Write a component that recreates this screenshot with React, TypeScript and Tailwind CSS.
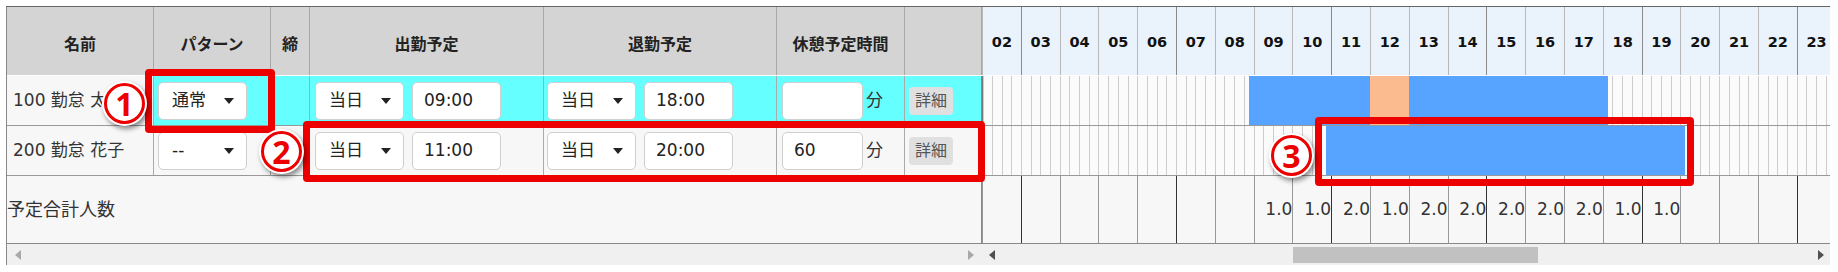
import React from "react";

type Bar = { from: number; to: number; color: string; pad: number };

type Row = {
  name: string;
  pattern: string;
  inDay: string;
  inTime: string;
  outDay: string;
  outTime: string;
  rest: string;
  active?: boolean;
  bars: Bar[];
};

const HOURS = Array.from({ length: 22 }, (_, i) => String(i + 2).padStart(2, "0"));
const HOUR_W = 38.8;

const TOTALS: Record<string, string> = {
  "09": "1.0",
  "10": "1.0",
  "11": "2.0",
  "12": "1.0",
  "13": "2.0",
  "14": "2.0",
  "15": "2.0",
  "16": "2.0",
  "17": "2.0",
  "18": "1.0",
  "19": "1.0",
};

const ROWS: Row[] = [
  {
    name: "100 勤怠 太郎",
    pattern: "通常",
    inDay: "当日",
    inTime: "09:00",
    outDay: "当日",
    outTime: "18:00",
    rest: "",
    active: true,
    bars: [
      { from: 9, to: 18, color: "bg-[#56a4ff]", pad: 5 },
      { from: 12, to: 13, color: "bg-[#fbbb8f]", pad: 0 },
    ],
  },
  {
    name: "200 勤怠 花子",
    pattern: "--",
    inDay: "当日",
    inTime: "11:00",
    outDay: "当日",
    outTime: "20:00",
    rest: "60",
    bars: [{ from: 11, to: 20, color: "bg-[#56a4ff]", pad: 5 }],
  },
];

const COLS = "grid grid-cols-[147px_117px_39px_234px_233px_128px_77px]";

function Caret() {
  return (
    <svg width="10" height="6" viewBox="0 0 10 6">
      <path d="M0 0h10L5 6z" fill="#222" />
    </svg>
  );
}

function Select({ value }: { value: string }) {
  return (
    <div className="flex h-[38px] w-[89px] shrink-0 items-center justify-between rounded-[5px] border border-[#cfcfcf] bg-white pl-[13px] pr-[12px] text-[17px] text-[#222]">
      <span>{value}</span>
      <Caret />
    </div>
  );
}

function TextBox({ value, width = "w-[89px]" }: { value: string; width?: string }) {
  return (
    <div
      className={`flex h-[38px] shrink-0 items-center rounded-[5px] border border-[#cfcfcf] bg-white pl-[11px] text-[17px] text-[#222] ${width}`}
    >
      {value}
    </div>
  );
}

function Badge({ n, className }: { n: string; className: string }) {
  return (
    <div
      className={`absolute flex h-[41px] w-[41px] items-center justify-center rounded-full border-[3px] border-[#ec0000] bg-white font-['Noto_Sans',sans-serif] text-[32px] font-bold leading-none text-[#ec0000] shadow-[0_0_0_2px_#ffffff,2px_3px_5px_2px_rgba(0,0,0,0.45)] ${className}`}
    >
      {n}
    </div>
  );
}

function Arrow({ dir, dark }: { dir: "left" | "right"; dark?: boolean }) {
  return (
    <svg width="6" height="10" viewBox="0 0 6 10">
      <path d={dir === "left" ? "M6 0v10L0 5z" : "M0 0v10l6-5z"} fill={dark ? "#505050" : "#a8a8a8"} />
    </svg>
  );
}

export default function App() {
  return (
    <div className="relative h-[272px] w-[1838px] overflow-hidden bg-white pl-[6px] pt-[6px] font-['DejaVu_Sans','Noto_Sans_CJK_JP',sans-serif] text-[#333]">
      <div className="flex w-[1824px] border-t border-[#666]">
        {/* left table */}
        <div className="w-[976px] shrink-0 border-l border-[#888]">
          <div className={`${COLS} h-[69px] border-b border-white bg-[#d4d4d4] text-[16px] font-bold text-[#222]`}>
            {["名前", "パターン", "締", "出勤予定", "退勤予定", "休憩予定時間", ""].map((h, i) => (
              <div key={i} className="flex items-center justify-center border-r border-[#a8a8a8] pt-[7px]">
                {h}
              </div>
            ))}
          </div>

          {ROWS.map((r) => (
            <div
              key={r.name}
              className={`${COLS} h-[50px] border-b border-[#999] ${r.active ? "bg-[#66ffff]" : "bg-[#f7f7f7]"}`}
            >
              <div className="flex items-center overflow-hidden whitespace-nowrap border-r border-[#aaa] bg-[#f7f7f7] pl-[6px] text-[17px]">
                {r.name}
              </div>
              <div className="flex items-center border-r border-[#aaa] pl-[4px]">
                <Select value={r.pattern} />
              </div>
              <div className="border-r border-[#aaa]" />
              <div className="flex items-center gap-[8px] border-r border-[#aaa] pl-[5px]">
                <Select value={r.inDay} />
                <TextBox value={r.inTime} />
              </div>
              <div className="flex items-center gap-[8px] border-r border-[#aaa] pl-[3px]">
                <Select value={r.outDay} />
                <TextBox value={r.outTime} />
              </div>
              <div className="flex items-center gap-[3px] border-r border-[#aaa] pl-[5px] text-[17px]">
                <TextBox value={r.rest} width="w-[81px]" />
                <span>分</span>
              </div>
              <div className="flex items-center border-r border-[#888] pl-[4px]">
                <div className="flex h-[28px] items-center rounded-[4px] bg-[#e0e0e0] px-[6px] text-[16px] text-[#555]">詳細</div>
              </div>
            </div>
          ))}

          <div className="flex h-[68px] items-center border-b border-r border-[#888] bg-[#f7f7f7] text-[18px]">
            予定合計人数
          </div>

          <div className="flex h-[21px] items-center justify-between bg-[#f0f0f0] px-[8px]">
            <Arrow dir="left" />
            <Arrow dir="right" />
          </div>
        </div>

        {/* gantt */}
        <div className="w-[848px] shrink-0 overflow-hidden">
          <div className="flex h-[69px] w-[854px] border-b border-white bg-[#eaf2fc] font-['DejaVu_Sans',sans-serif] text-[14.5px] font-bold text-[#111]">
            {HOURS.map((h, i) => (
              <div
                key={h}
                className={`flex w-[38.8px] shrink-0 items-center justify-center border-l pt-[4px] ${
                  i % 4 === 1 ? "border-[#8a8a8a]" : "border-[#b8b8b8]"
                } ${i === 0 ? "border-[#777]" : ""}`}
              >
                {h}
              </div>
            ))}
          </div>

          {ROWS.map((r) => (
            <div key={r.name} className="relative flex h-[50px] w-[854px] border-b border-[#999] bg-white">
              {HOURS.map((h, i) => (
                <div key={h} className={`flex w-[38.8px] shrink-0 ${i === 0 ? "border-l border-[#777]" : ""}`}>
                  {[0, 1, 2, 3].map((q) => (
                    <div key={q} className="flex-1 border-l border-[#cdcdcd] bg-[#fbfbfb]" />
                  ))}
                </div>
              ))}
              {r.bars.map((b, i) => (
                <div
                  key={i}
                  className={`absolute bottom-0 top-0 ${b.color}`}
                  style={{ left: (b.from - 2) * HOUR_W - b.pad, width: (b.to - b.from) * HOUR_W + b.pad * 2 }}
                />
              ))}
            </div>
          ))}

          <div className="flex h-[68px] w-[854px] border-b border-[#888] bg-[#f7f7f7] text-[17px] text-[#333]">
            {HOURS.map((h, i) => (
              <div
                key={h}
                className={`flex w-[38.8px] shrink-0 items-center justify-end border-l ${
                  i % 4 === 1 ? "border-[#333]" : "border-[#999]"
                } ${i === 0 ? "border-[#777]" : ""}`}
              >
                {TOTALS[h] ?? ""}
              </div>
            ))}
          </div>

          <div className="flex h-[21px] items-center bg-[#f0f0f0] pl-[7px] pr-[6px]">
            <Arrow dir="left" dark />
            <div className="ml-[298px] h-[16px] w-[245px] bg-[#c1c1c1]" />
            <div className="flex-1" />
            <Arrow dir="right" dark />
          </div>
        </div>
      </div>

      {/* annotations */}
      <div className="absolute left-[145px] top-[69px] h-[64px] w-[130px] rounded-[4px] border-[7px] border-[#ec0000]" />
      <div className="absolute left-[303px] top-[121px] h-[61px] w-[682px] rounded-[4px] border-[7px] border-[#ec0000]" />
      <div className="absolute left-[1315px] top-[117px] h-[69px] w-[379px] rounded-[4px] border-[7px] border-[#ec0000]" />
      <Badge n="1" className="left-[104px] top-[83px]" />
      <Badge n="2" className="left-[261px] top-[131px]" />
      <Badge n="3" className="left-[1271px] top-[135px]" />
    </div>
  );
}
